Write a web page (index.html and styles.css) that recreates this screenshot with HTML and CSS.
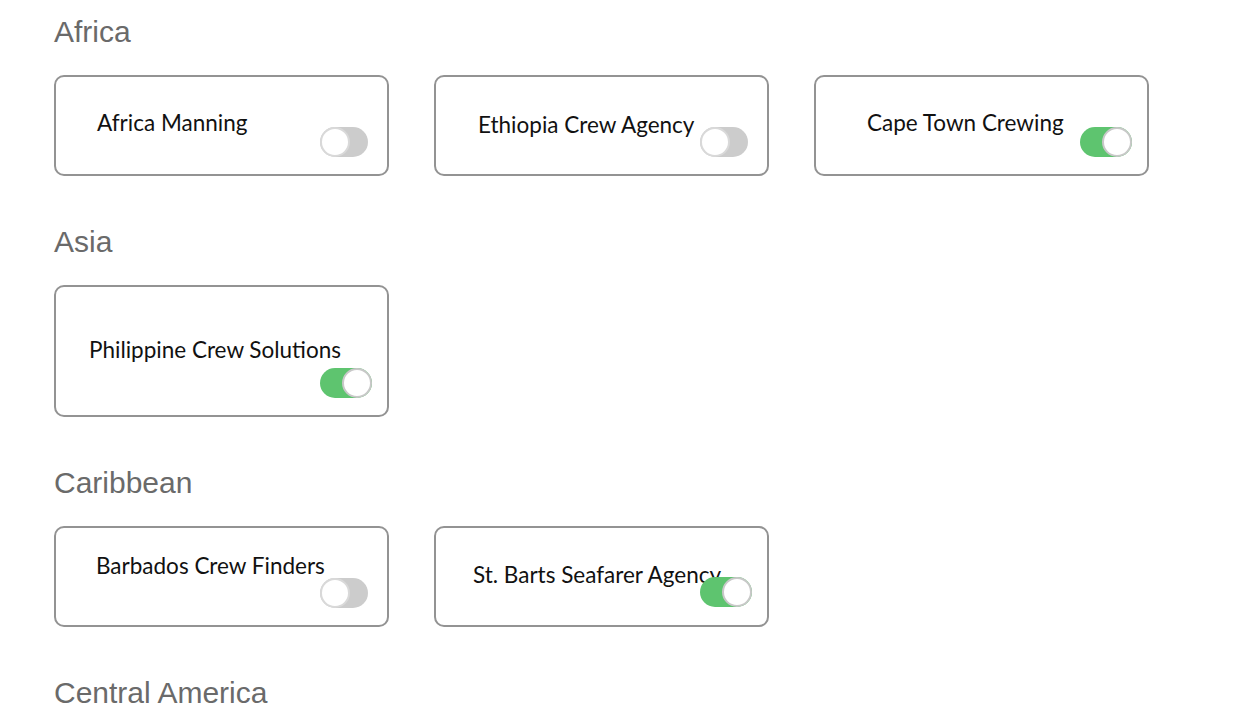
FILE: index.html
```html
<!DOCTYPE html>
<html lang="en">
<head>
<meta charset="utf-8">
<title>Crewing agencies</title>
<link rel="stylesheet" href="styles.css">
</head>
<body>
<main class="page">
  <section class="region">
    <h2 class="region-title">Africa</h2>
    <div class="cards">
      <div class="card card-africa">
        <span class="name">Africa Manning</span>
        <span class="toggle"></span>
      </div>
      <div class="card card-ethiopia">
        <span class="name">Ethiopia Crew Agency</span>
        <span class="toggle"></span>
      </div>
      <div class="card card-cape">
        <span class="name">Cape Town Crewing</span>
        <span class="toggle on"></span>
      </div>
    </div>
  </section>
  <section class="region">
    <h2 class="region-title">Asia</h2>
    <div class="cards">
      <div class="card card-tall card-phil">
        <span class="name">Philippine Crew Solutions</span>
        <span class="toggle on"></span>
      </div>
    </div>
  </section>
  <section class="region">
    <h2 class="region-title">Caribbean</h2>
    <div class="cards">
      <div class="card card-barbados">
        <span class="name">Barbados Crew Finders</span>
        <span class="toggle"></span>
      </div>
      <div class="card card-barts">
        <span class="name">St. Barts Seafarer Agency</span>
        <span class="toggle on toggle-high"></span>
      </div>
    </div>
  </section>
  <section class="region">
    <h2 class="region-title">Central America</h2>
  </section>
</main>
</body>
</html>
```

FILE: styles.css
```css
html, body {
  margin: 0;
  padding: 0;
  background: #ffffff;
}

.page {
  padding: 17px 0 0 54px;
  display: flex;
  flex-direction: column;
  gap: 51px;
}

.region-title {
  margin: 0 0 28px 0;
  font-family: "Liberation Sans", Arial, sans-serif;
  font-weight: normal;
  font-size: 30px;
  line-height: 30px;
  color: #6a6a6a;
}

.cards {
  display: flex;
  gap: 45px;
}

.card {
  box-sizing: border-box;
  width: 335px;
  height: 101px;
  border: 2px solid #939393;
  border-radius: 10px;
  display: grid;
  grid-template-columns: 1fr;
  grid-template-rows: 1fr;
}

.card-tall {
  height: 132px;
}

.name {
  grid-area: 1 / 1;
  align-self: start;
  justify-self: start;
  font-family: Lato, "Open Sans", sans-serif;
  font-size: 22.5px;
  line-height: 24px;
  color: #111111;
  white-space: nowrap;
}

.card-africa .name { margin: 34px 0 0 41px; }
.card-ethiopia .name { margin: 36px 0 0 42px; }
.card-cape .name { margin: 34px 0 0 51px; }
.card-phil .name { margin: 51px 0 0 33px; }
.card-barbados .name { margin: 26px 0 0 40px; }
.card-barts .name { margin: 35px 0 0 37px; }

.toggle {
  grid-area: 1 / 1;
  align-self: start;
  justify-self: start;
  margin: 50px 0 0 264px;
  width: 48px;
  height: 30px;
  border-radius: 15px;
  background: #cccccc;
  display: flex;
  justify-content: flex-start;
}

.toggle::after {
  content: "";
  box-sizing: border-box;
  width: 30px;
  height: 30px;
  border-radius: 50%;
  background: #ffffff;
  border: 2px solid #d9d9d9;
}

.toggle.on {
  width: 52px;
  background: #5ec46f;
  justify-content: flex-end;
}

.toggle.on::after {
  border: 2px solid #c8c8c8;
}

.card-phil .toggle { margin-top: 81px; }
.toggle-high { margin-top: 49px; }
```
